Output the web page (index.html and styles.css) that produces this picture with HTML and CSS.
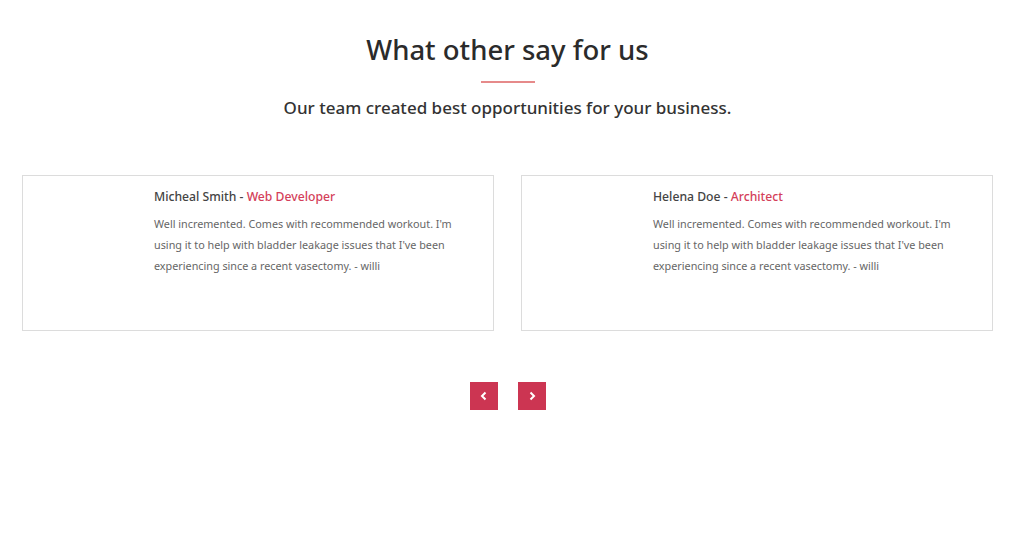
FILE: index.html
```html
<!DOCTYPE html>
<html lang="en">
<head>
  <meta charset="UTF-8" />
  <meta name="viewport" content="width=device-width, initial-scale=1.0"/>
  <title>Testimonials</title>
  <link rel="stylesheet" href="styles.css">
</head>
<body>

  <section class="testimonials">
    <div class="section-head">
      <h2>What other say for us</h2>
      <span class="line"></span>
      <p>Our team created best opportunities for your business.</p>
    </div>

    <div class="cards">
      <div class="card">
        <div class="avatar"></div>
        <div class="card-body">
          <h4>Micheal Smith - <span>Web Developer</span></h4>
          <p>Well incremented. Comes with recommended workout. I'm using it to help with bladder leakage issues that I've been experiencing since a recent vasectomy. - willi</p>
        </div>
      </div>

      <div class="card">
        <div class="avatar"></div>
        <div class="card-body">
          <h4>Helena Doe - <span>Architect</span></h4>
          <p>Well incremented. Comes with recommended workout. I'm using it to help with bladder leakage issues that I've been experiencing since a recent vasectomy. - willi</p>
        </div>
      </div>
    </div>

    <div class="nav">
      <button class="nav-btn" aria-label="Previous">
        <svg width="10" height="10" viewBox="0 0 10 10"><path d="M6.5 1.5 L3 5 L6.5 8.5" fill="none" stroke="#fff" stroke-width="2"/></svg>
      </button>
      <button class="nav-btn" aria-label="Next">
        <svg width="10" height="10" viewBox="0 0 10 10"><path d="M3.5 1.5 L7 5 L3.5 8.5" fill="none" stroke="#fff" stroke-width="2"/></svg>
      </button>
    </div>
  </section>

</body>
</html>
```

FILE: styles.css
```css
body {
  margin: 0;
  font-family: 'Noto Sans', 'Open Sans', sans-serif;
  background: #fff;
  color: #333;
}
.testimonials {
  padding: 30px 31px 0 22px;
}
.section-head {
  display: flex;
  flex-direction: column;
  align-items: center;
}
.section-head h2 {
  margin: 0;
  font-size: 27.5px;
  font-weight: 500;
  color: #2b2b2b;
  line-height: 40px;
}
.line {
  display: block;
  width: 54px;
  height: 2px;
  background: #e68a8a;
  margin-top: 11px;
}
.section-head p {
  margin: 12px 0 0;
  font-size: 17px;
  font-weight: 500;
  color: #333;
  line-height: 26px;
}
.cards {
  display: flex;
  gap: 27px;
  margin-top: 54px;
}
.card {
  flex: 1;
  display: flex;
  height: 156px;
  border: 1px solid #dcdcdc;
  padding: 12px 30px 0 0;
  box-sizing: border-box;
}
.avatar {
  width: 131px;
  flex-shrink: 0;
}
.card-body h4 {
  margin: 0;
  font-size: 12.2px;
  font-weight: 500;
  color: #444;
  line-height: 18px;
}
.card-body h4 span {
  color: #d43f5a;
}
.card-body p {
  margin: 7px 0 0;
  font-size: 10.8px;
  line-height: 21px;
  color: #666;
}
.nav {
  display: flex;
  justify-content: center;
  gap: 20px;
  margin-top: 51px;
}
.nav-btn {
  width: 28px;
  height: 28px;
  border: none;
  padding: 0;
  background: #cc3552;
  display: flex;
  align-items: center;
  justify-content: center;
  cursor: pointer;
}
```
